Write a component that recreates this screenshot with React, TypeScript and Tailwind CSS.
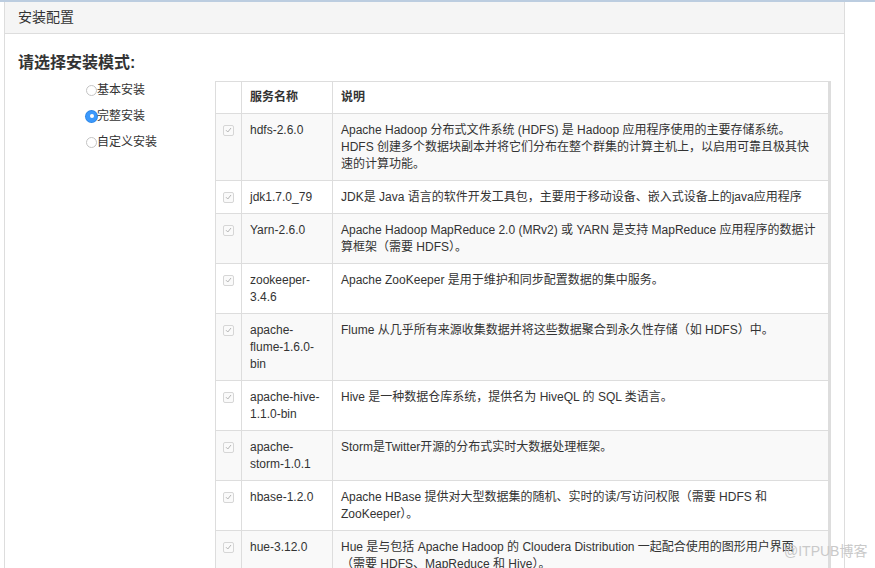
/**
 * Install configuration panel — mode radios and the service table.
 */
import type { ReactNode } from 'react';

type Service = {
  name: ReactNode;
  desc: ReactNode;
};

const services: Service[] = [
  {
    name: 'hdfs-2.6.0',
    desc: (
      <>
        Apache Hadoop 分布式文件系统 (HDFS) 是 Hadoop 应用程序使用的主要存储系统。
        <br />
        HDFS 创建多个数据块副本并将它们分布在整个群集的计算主机上，以启用可靠且极其快
        <br />
        速的计算功能。
      </>
    ),
  },
  {
    name: 'jdk1.7.0_79',
    desc: 'JDK是 Java 语言的软件开发工具包，主要用于移动设备、嵌入式设备上的java应用程序',
  },
  {
    name: 'Yarn-2.6.0',
    desc: (
      <>
        Apache Hadoop MapReduce 2.0 (MRv2) 或 YARN 是支持 MapReduce 应用程序的数据计
        <br />
        算框架（需要 HDFS）。
      </>
    ),
  },
  {
    name: (
      <>
        zookeeper-
        <br />
        3.4.6
      </>
    ),
    desc: 'Apache ZooKeeper 是用于维护和同步配置数据的集中服务。',
  },
  {
    name: (
      <>
        apache-
        <br />
        flume-1.6.0-
        <br />
        bin
      </>
    ),
    desc: 'Flume 从几乎所有来源收集数据并将这些数据聚合到永久性存储（如 HDFS）中。',
  },
  {
    name: (
      <>
        apache-hive-
        <br />
        1.1.0-bin
      </>
    ),
    desc: 'Hive 是一种数据仓库系统，提供名为 HiveQL 的 SQL 类语言。',
  },
  {
    name: (
      <>
        apache-
        <br />
        storm-1.0.1
      </>
    ),
    desc: 'Storm是Twitter开源的分布式实时大数据处理框架。',
  },
  {
    name: 'hbase-1.2.0',
    desc: (
      <>
        Apache HBase 提供对大型数据集的随机、实时的读/写访问权限（需要 HDFS 和
        <br />
        ZooKeeper）。
      </>
    ),
  },
  {
    name: 'hue-3.12.0',
    desc: (
      <>
        Hue 是与包括 Apache Hadoop 的 Cloudera Distribution 一起配合使用的图形用户界面
        <br />
        （需要 HDFS、MapReduce 和 Hive）。
      </>
    ),
  },
];

function Radio({ label, checked = false }: { label: string; checked?: boolean }) {
  return (
    <div className="flex h-[16px] items-center">
      {checked ? (
        <span className="flex h-[11px] w-[11px] items-center justify-center rounded-full bg-[#3b99fc] shadow-[0_0_0_1px_#2d86e6]">
          <span className="h-[4px] w-[4px] rounded-full bg-white" />
        </span>
      ) : (
        <span className="h-[11px] w-[11px] rounded-full border border-[#c4c4c4] bg-white" />
      )}
      <span className="text-[12px] leading-[16px] text-[#333]">{label}</span>
    </div>
  );
}

function DisabledCheck() {
  return (
    <span className="flex h-[11px] w-[11px] items-center justify-center rounded-[2px] border border-[#d6d6d6] bg-[#fafafa]">
      <svg width="7" height="6" viewBox="0 0 7 6" fill="none">
        <path d="M1 3.2 L2.8 5 L6 1" stroke="#b5b5b5" strokeWidth="1" />
      </svg>
    </span>
  );
}

export default function App() {
  return (
    <div
      className="relative h-[568px] w-[875px] overflow-hidden bg-white text-[#333]"
      style={{ fontFamily: '"Liberation Sans", "Noto Sans CJK SC", sans-serif' }}
    >
      <div className="h-[2px] bg-[#bccde0]" />
      <div className="ml-[4px] h-[566px] w-[841px] border-x border-[#dddddd]">
        <div className="flex h-[32px] items-center border-b border-[#dddddd] bg-[#f5f5f5] pl-[13px] text-[14px]">
          安装配置
        </div>
        <div className="pl-[13px] pt-[19px]">
          <h3 className="text-[16px] font-bold leading-[20px]">请选择安装模式:</h3>
          <div className="mt-[8px] flex">
            <div className="flex w-[197px] flex-col gap-[10px] pl-[68px] pt-[1px]">
              <Radio label="基本安装" />
              <Radio label="完整安装" checked />
              <Radio label="自定义安装" />
            </div>
            <table className="w-[616px] border-collapse border border-r-[3px] border-[#dddddd] text-[12px] leading-[17px]">
              <thead>
                <tr className="h-[32px]">
                  <th className="w-[26px] border border-[#dddddd]" />
                  <th className="w-[91px] border border-[#dddddd] px-[8px] text-left font-bold">
                    服务名称
                  </th>
                  <th className="border border-[#dddddd] px-[8px] text-left font-bold">说明</th>
                </tr>
              </thead>
              <tbody>
                {services.map((s, i) => (
                  <tr key={i} className={i % 2 === 0 ? 'bg-[#f9f9f9]' : 'bg-white'}>
                    <td className="border border-[#dddddd] py-[7.5px] align-top">
                      <div className="flex h-[17px] items-center justify-center">
                        <DisabledCheck />
                      </div>
                    </td>
                    <td className="border border-[#dddddd] px-[8px] py-[7.5px] align-top">
                      {s.name}
                    </td>
                    <td className="whitespace-nowrap border border-[#dddddd] px-[8px] py-[7.5px] align-top">
                      {s.desc}
                    </td>
                  </tr>
                ))}
              </tbody>
            </table>
          </div>
        </div>
      </div>
      <div className="absolute left-[784px] top-[542px] text-[14px] leading-[18px] text-[#c9c9c9]">
        @ITPUB博客
      </div>
    </div>
  );
}
